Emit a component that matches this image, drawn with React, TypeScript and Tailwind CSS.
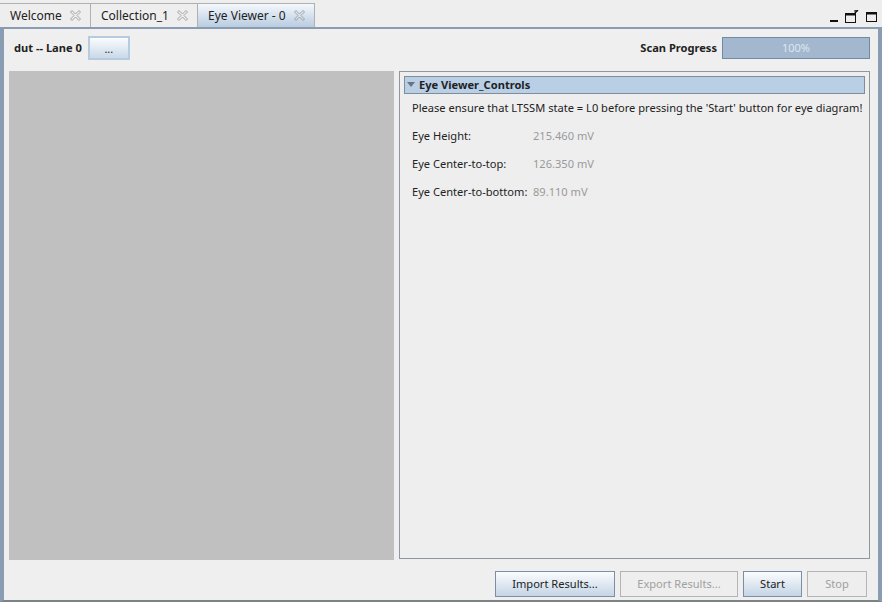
import React from 'react';

const font = { fontFamily: '"Noto Sans", "Open Sans", sans-serif' };

function CloseIcon() {
  return (
    <svg width="11" height="11" viewBox="0 0 11 11">
      <path
        d="M0.5 2 L2 0.5 L5.5 4 L9 0.5 L10.5 2 L7 5.5 L10.5 9 L9 10.5 L5.5 7 L2 10.5 L0.5 9 L4 5.5 Z"
        fill="none"
        stroke="#9a9a9a"
        strokeWidth="0.9"
      />
    </svg>
  );
}

function Tab({ label, active, width }: { label: string; active?: boolean; width: string }) {
  return (
    <div
      className={`mt-[3px] flex h-[24px] items-center justify-between border-r border-t border-[#b0b0b0] pl-[10px] pr-[9px] text-[12px] text-[#222] ${width} ${
        active ? 'bg-gradient-to-b from-[#f4f8fc] to-[#b9cce0]' : 'bg-[#eeeeee]'
      }`}
    >
      <span>{label}</span>
      <CloseIcon />
    </div>
  );
}

function Btn({ label, disabled, width }: { label: string; disabled?: boolean; width: string }) {
  return (
    <button
      className={`h-[26px] ${width} border text-[11.1px] ${
        disabled
          ? 'border-[#b4b4b4] bg-[#eeeeee] text-[#a0a0a0]'
          : 'border-[#7c8ea3] bg-gradient-to-b from-[#fbfcfd] to-[#c4d5e6] text-[#222]'
      }`}
    >
      {label}
    </button>
  );
}

export default function App() {
  return (
    <div className="flex h-[602px] w-[882px] flex-col bg-[#eeeeee]" style={font}>
      {/* tab strip */}
      <div className="flex h-[27px] items-stretch bg-[#eeeeee]">
        <Tab label="Welcome" width="w-[91px]" />
        <Tab label="Collection_1" width="w-[107px]" />
        <Tab label="Eye Viewer - 0" active width="w-[117px]" />
        <div className="flex-1" />
        <div className="flex items-center gap-[7px] pr-[5px] pt-[6px]">
          <div className="mt-[8px] h-[2px] w-[8px] bg-[#111]" />
          <svg width="14" height="13" viewBox="0 0 14 13">
            <rect x="0.5" y="3.5" width="10" height="9" fill="none" stroke="#111" />
            <rect x="0.5" y="3.5" width="10" height="2" fill="#111" />
            <path d="M9 1 L13 1 M11 -1 L11 3 M9 4 L13 0" stroke="#111" strokeWidth="1.2" />
          </svg>
          <svg width="11" height="10" viewBox="0 0 11 10">
            <rect x="0.5" y="0.5" width="10" height="9" fill="none" stroke="#111" />
            <rect x="0.5" y="0.5" width="10" height="2" fill="#111" />
          </svg>
        </div>
      </div>

      {/* view frame */}
      <div className="flex min-h-0 flex-1 flex-col border-x-[4px] border-t-[2px] border-b-[2px] border-l-[#8a9cb1] border-r-[#8a9cb1] border-t-[#8a9cb1] border-b-[#7d8285] bg-[#efefef] pl-[5px] pr-[8px]">
        <div className="flex h-[42px] items-start justify-between pt-[7px]">
          <div className="flex items-center gap-[6px] pl-[5px]">
            <span className="text-[11.1px] font-bold text-[#222]">dut -- Lane 0</span>
            <button className="h-[24px] w-[42px] border-2 border-[#b7cbe0] bg-gradient-to-b from-[#fbfcfd] to-[#c9d9e9] text-[11px] leading-none text-[#222]">
              ...
            </button>
          </div>
          <div className="mt-[1px] flex items-center gap-[5px]">
            <span className="text-[11.1px] font-bold text-[#222]">Scan Progress</span>
            <div className="flex h-[22px] w-[148px] items-center justify-center border border-[#6f8aa8] bg-[#a3b8ce] text-[11px] text-[#dde6ef]">
              100%
            </div>
          </div>
        </div>

        <div className="flex min-h-0 flex-1 gap-[5px]">
          <div className="h-[489px] w-[385px] bg-[#c0c0c0]" />
          <div className="flex h-[488px] min-w-0 flex-1 flex-col border border-[#8e969e] bg-[#eeeeee] px-[4px] pt-[4px]">
            <div className="flex h-[18px] items-center border border-[#7f8c9a] bg-[#b8cfe6] pl-[2px]">
              <svg width="8" height="6" viewBox="0 0 8 6" className="mr-[4px]">
                <path d="M0 0 L8 0 L4 5 Z" fill="#6a7480" />
              </svg>
              <span className="text-[11.1px] font-bold text-[#222]">Eye Viewer_Controls</span>
            </div>
            <div className="pl-[8px] pt-[6px] text-[11.1px] text-[#222]">
              <div className="h-[16px] whitespace-nowrap leading-[16px]">
                Please ensure that LTSSM state = L0 before pressing the 'Start' button for eye diagram!
              </div>
              <div className="mt-[12px] grid grid-cols-[121px_1fr] gap-y-[12px] leading-[16px]">
                <span>Eye Height:</span>
                <span className="text-[#9a9a9a]">215.460 mV</span>
                <span>Eye Center-to-top:</span>
                <span className="text-[#9a9a9a]">126.350 mV</span>
                <span>Eye Center-to-bottom:</span>
                <span className="text-[#9a9a9a]">89.110 mV</span>
              </div>
            </div>
          </div>
        </div>

        <div className="flex h-[39px] items-start justify-end gap-[5px] pr-[3px] pt-[10px]">
          <Btn label="Import Results..." width="w-[120px]" />
          <Btn label="Export Results..." disabled width="w-[118px]" />
          <Btn label="Start" width="w-[59px]" />
          <Btn label="Stop" disabled width="w-[60px]" />
        </div>
      </div>
    </div>
  );
}
